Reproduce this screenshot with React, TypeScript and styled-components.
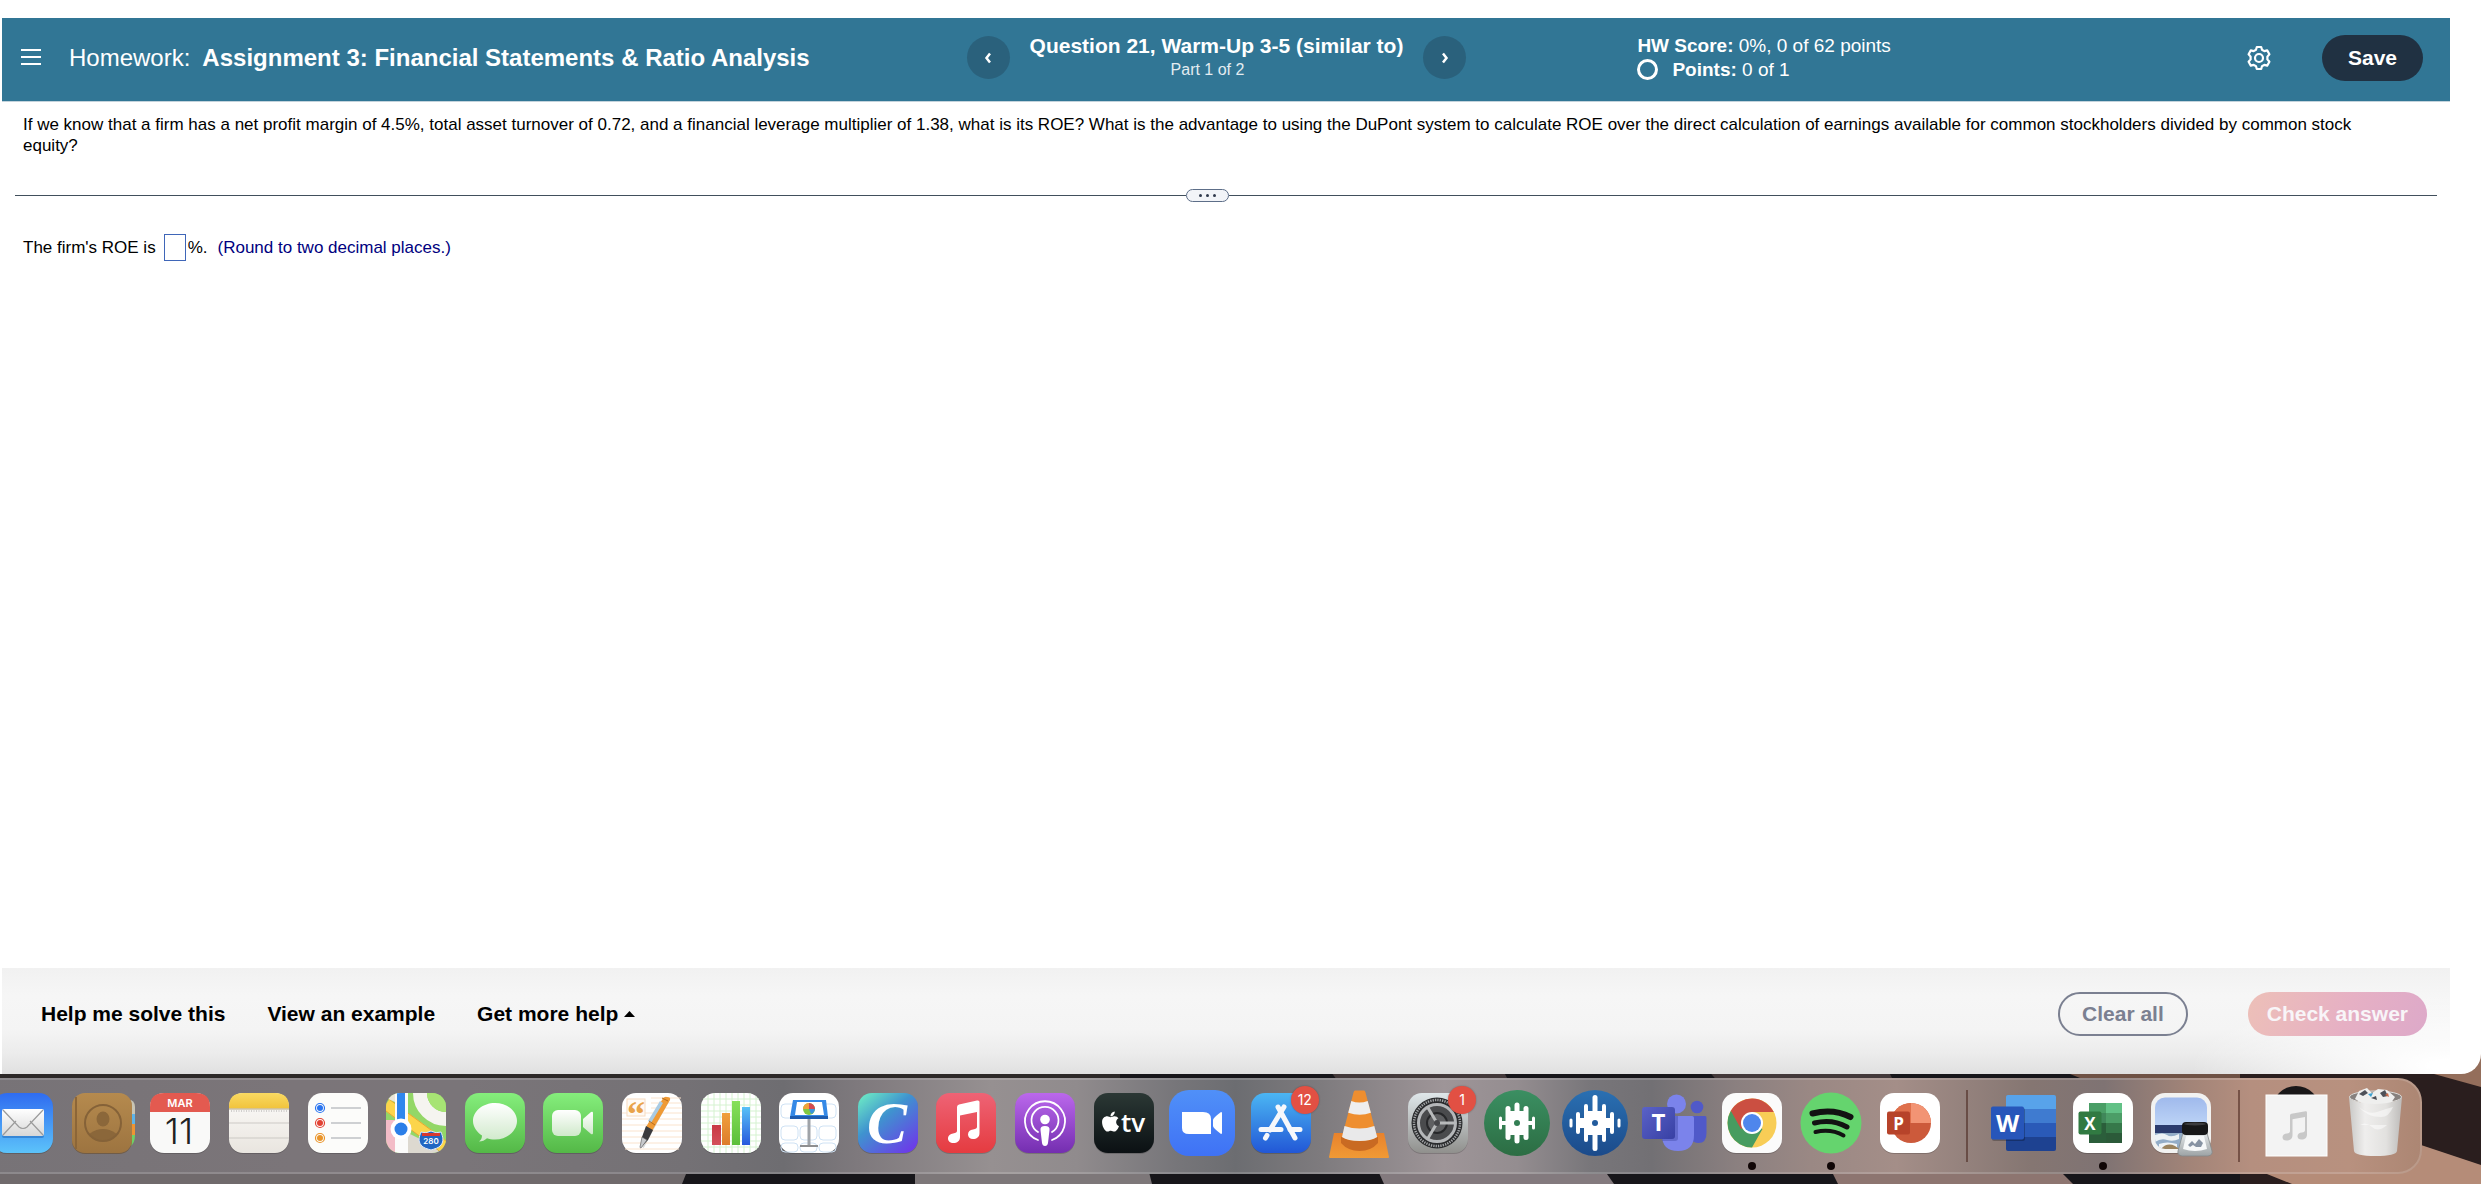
import React from 'react';
import styled, { createGlobalStyle } from 'styled-components';
import { FaApple } from 'react-icons/fa';

const sans = '"Liberation Sans", Arial, Helvetica, sans-serif';

const GlobalStyle = createGlobalStyle`
  *, *::before, *::after { box-sizing: border-box; }
  body { margin: 0; background: #1b1719; font-family: ${sans}; color: #000; }
  button, input { font-family: inherit; margin: 0; }
`;

/* ---------- page frame ---------- */

const Desktop = styled.div`
  position: relative;
  display: flex;
  flex-direction: column;
  min-height: 100vh;
  overflow: hidden;
`;

const Wallpaper = styled.svg`
  position: absolute;
  left: 0;
  bottom: 0;
  width: 100%;
  height: 140px;
`;

const BrowserWindow = styled.div`
  position: relative;
  flex: 1;
  display: flex;
  flex-direction: column;
  padding: 18px 31px 0 2px;
  background: #fff;
  border-bottom-right-radius: 20px;
`;

/* ---------- header ---------- */

const Header = styled.header`
  display: grid;
  grid-template-columns: 1fr auto 1fr;
  align-items: center;
  height: 84px;
  padding: 0 27px 4px 8px;
  background: #317695;
  border-bottom: 1px solid #c3d3dc;
  color: #fff;
`;

const HeaderStart = styled.div`
  display: flex;
  align-items: center;
  gap: 28px;
  padding-left: 11px;
`;

const IconButton = styled.button`
  display: flex;
  padding: 0;
  border: 0;
  background: none;
  color: inherit;
`;

const AssignmentTitle = styled.h1`
  margin: 0;
  font-size: 24px;
  line-height: 30px;
  font-weight: 400;
  white-space: nowrap;
`;

const AssignmentName = styled.strong`
  margin-left: 12px;
`;

const QuestionNav = styled.nav`
  display: flex;
  align-items: center;
  gap: 20px;
`;

const RoundButton = styled.button`
  display: flex;
  align-items: center;
  justify-content: center;
  width: 43px;
  height: 43px;
  padding: 0;
  border: 0;
  border-radius: 50%;
  background: #2a617c;
  color: #fff;
`;

const QuestionLabel = styled.div`
  text-align: center;
  line-height: 24px;
  white-space: nowrap;
`;

const QuestionTitle = styled.h2`
  margin: 0;
  font-size: 21px;
  line-height: 24px;
`;

const QuestionPart = styled.div`
  padding-right: 18px;
  font-size: 16px;
  color: #e3ecf1;
`;

const HeaderEnd = styled.div`
  display: flex;
  align-items: center;
  padding-left: 171px;
`;

const Score = styled.div`
  font-size: 19px;
  line-height: 24px;
  white-space: nowrap;
`;

const PointsRow = styled.div`
  display: flex;
  align-items: center;
  gap: 14px;
`;

const StatusRing = styled.span`
  width: 21px;
  height: 21px;
  border: 3px solid #fff;
  border-radius: 50%;
`;

const HeaderActions = styled.div`
  display: flex;
  align-items: center;
  gap: 50px;
  margin-left: auto;
`;

const SaveButton = styled.button`
  height: 46px;
  padding: 0 26px;
  border: 0;
  border-radius: 23px;
  background: #203142;
  color: #fff;
  font-size: 21px;
  font-weight: 700;
`;

/* ---------- question ---------- */

const Main = styled.main`
  flex: 1;
  padding: 12px 13px 0;
  font-size: 17px;
  line-height: 21px;
`;

const Question = styled.p`
  margin: 0;
  padding: 0 32px 0 8px;
`;

const Divider = styled.div`
  display: flex;
  align-items: center;
  margin: 33px 0 32px;

  &::before, &::after {
    content: '';
    flex: 1 1 0px;
    height: 1px;
    background: #414f5c;
  }

  &::after {
    flex-basis: 37px;
  }
`;

const DividerHandle = styled.button`
  display: flex;
  align-items: center;
  justify-content: center;
  gap: 4px;
  width: 43px;
  height: 13px;
  padding: 0;
  border: 1px solid #5d6e88;
  border-radius: 7px;
  background: #f2f4f8;
`;

const HandleDot = styled.span`
  width: 3px;
  height: 3px;
  border-radius: 50%;
  background: #303a4c;
`;

const AnswerRow = styled.div`
  display: flex;
  align-items: center;
  padding-left: 8px;
`;

const AnswerInput = styled.input`
  width: 22px;
  height: 27px;
  margin: 0 2px 0 8px;
  padding: 0 2px;
  border: 1px solid #3f66b8;
  border-radius: 0;
  background: #fff;
  font-size: 17px;
`;

const Hint = styled.span`
  margin-left: 10px;
  color: #000080;
`;

/* ---------- footer ---------- */

const Footer = styled.footer`
  display: flex;
  align-items: center;
  justify-content: space-between;
  padding: 24px 23px 38px 39px;
  background:
    radial-gradient(ellipse 260px 72px at 100% 92%, #fff 8%, rgba(255, 255, 255, 0) 100%),
    linear-gradient(#f1f1f1, #f6f6f6 26%, #f4f4f4 58%, #ececec 80%, #e0e0e0);
`;

const HelpLinks = styled.div`
  display: flex;
  gap: 42px;
`;

const HelpButton = styled.button`
  display: flex;
  align-items: center;
  gap: 6px;
  padding: 0;
  border: 0;
  background: none;
  color: #000;
  font-size: 21px;
  line-height: 24px;
  font-weight: 700;
`;

const FooterActions = styled.div`
  display: flex;
  gap: 60px;
`;

const PillButton = styled.button<{ $primary?: boolean }>`
  height: 44px;
  padding: 0 ${p => (p.$primary ? 19 : 22)}px;
  border: ${p => (p.$primary ? '0' : '2px solid #7b8091')};
  border-radius: 22px;
  background: ${p => (p.$primary ? 'linear-gradient(110deg, #edc0b8, #e6b0c4 55%, #dda9c9)' : 'transparent')};
  color: ${p => (p.$primary ? '#f8f5f8' : '#7b8091')};
  font-size: 21px;
  font-weight: 700;
`;

/* ---------- dock ---------- */

const Dock = styled.div`
  position: relative;
  display: flex;
  margin: 4px 59px 10px -24px;
  padding: 0 6px;
  border: 2px solid rgba(255, 255, 255, 0.16);
  border-radius: 24px;
  background: linear-gradient(90deg, #777377, #7b7579 13%, #7a7579 20%, #747175 29%, #6e6d71 33%,
    #7e797d 36%, #969091 41.5%, #908b8d 45%, #77767a 49%, #6c6d71 51.5%, #7e7b7e 55%, #9e9598 60%,
    #948d90 63%, #78767a 66%, #727074 68.5%, #8b8080 72%, #9a8884 75%, #a48e88 78.5%, #857672 84%,
    #7f7373 87%, #a28478 90.5%, #b58f7f 93%, #b8917f 97%, #ac8673);
  background-origin: border-box;
`;

const Slot = styled.div`
  position: relative;
  flex: 1 1 0;
  min-width: 0;
  display: flex;
  justify-content: center;
`;

const Art = styled.svg`
  flex: none;
  display: block;
  width: 80px;
  height: 92px;
  overflow: visible;
`;

const Badge = styled.span`
  position: absolute;
  top: 6px;
  left: calc(50% + 10px);
  width: 28px;
  height: 28px;
  border-radius: 50%;
  background: #e25043;
  box-shadow: 0 0 2px rgba(0, 0, 0, 0.3);
  color: #fff;
  font-family: Inter, sans-serif;
  font-size: 14px;
  line-height: 28px;
  text-align: center;
`;

const RunningDot = styled.span`
  position: absolute;
  bottom: 2px;
  left: calc(50% - 4px);
  width: 8px;
  height: 8px;
  border-radius: 50%;
  background: #100606;
`;

const DockRule = styled.div`
  width: 2px;
  height: 72px;
  margin: 10px 17px;
  background: rgba(70, 35, 25, 0.55);
`;

type TileProps = { fill: string };
const Tile = ({ fill }: TileProps) => (
  <>
    <rect x="10" y="14" width="60" height="60" rx="14" fill="#000" opacity="0.18" />
    <rect x="10" y="13" width="60" height="60" rx="14" fill={fill} />
  </>
);

const grad = (id: string, from: string, to: string, diagonal = false) => (
  <linearGradient id={id} x1="0" y1="0" x2={diagonal ? 1 : 0} y2="1">
    <stop offset="0" stopColor={from} />
    <stop offset="1" stopColor={to} />
  </linearGradient>
);

const Mail = () => (
  <>
    <defs>{grad('mail', '#2f6cf0', '#5cc3fa')}{grad('env', '#ffffff', '#d7d7d7')}</defs>
    <Tile fill="url(#mail)" />
    <rect x="19" y="30" width="42" height="28" rx="2" fill="#1b62b5" opacity=".5" />
    <rect x="19" y="29" width="42" height="27" rx="2" fill="url(#env)" />
    <path d="M20 55 33 41M60 55 47 41M20 30l16 17q4 3 8 0L60 30" fill="none" stroke="#9b9b9b" strokeWidth="1.2" />
  </>
);

const Contacts = () => (
  <>
    <defs>{grad('ctc', '#b58a4e', '#9d7440')}</defs>
    <path d="M62 20h7q4 2 4 7v7H62z" fill="#c9c5b4" />
    <path d="M62 34h11v10H62z" fill="#5db4ea" />
    <path d="M62 44h11v11H62z" fill="#ee9433" />
    <path d="M62 55h11q0 9-5 11h-6z" fill="#6fd065" />
    <rect x="10" y="14" width="60" height="60" rx="13" fill="#6b4d28" opacity=".6" />
    <rect x="10" y="13" width="60" height="60" rx="13" fill="url(#ctc)" />
    <path d="M14 17v52" stroke="#8c6638" strokeWidth="2" />
    <clipPath id="ctcClip"><circle cx="41" cy="43" r="18" /></clipPath>
    <g clipPath="url(#ctcClip)" fill="#8b673a">
      <ellipse cx="41" cy="39" rx="6.5" ry="7.5" />
      <ellipse cx="41" cy="62" rx="17" ry="13" />
    </g>
    <circle cx="41" cy="43" r="18" fill="none" stroke="#856238" strokeWidth="2" />
  </>
);

const Calendar = () => (
  <>
    <Tile fill="#f9f9f8" />
    <path d="M10 32v-5q0-14 14-14h32q14 0 14 14v5z" fill="#e35a50" />
    <text x="40" y="27" textAnchor="middle" fontFamily="Inter, sans-serif" fontWeight="600" fontSize="11" fill="#fff">MAR</text>
    <text x="39" y="64" textAnchor="middle" fontFamily="Inter, sans-serif" fontWeight="300" fontSize="36" fill="#222">11</text>
  </>
);

const Notes = () => (
  <>
    <defs>{grad('nts', '#fdfcfa', '#e9e5df')}{grad('ntsTop', '#f9da62', '#f1c33c')}</defs>
    <Tile fill="url(#nts)" />
    <path d="M10 28.500v-1.500q0-14 14-14h32q14 0 14 14v1.500z" fill="url(#ntsTop)" />
    <path d="M10 29h60" stroke="#b7a98a" />
    <path d="M12 31h56" stroke="#aaa" strokeDasharray="1 1.500" />
    <path d="M10 43h60M10 58h60" stroke="#ccc9c5" />
  </>
);

const Reminders = () => (
  <>
    <Tile fill="#fcfcfa" />
    {[['#2a74f0', 28], ['#e24334', 43], ['#ea9429', 58]].map(([c, y]) => (
      <g key={y}>
        <circle cx="22" cy={y} r="4.500" fill="none" stroke={c as string} strokeWidth="1.200" />
        <circle cx="22" cy={y} r="3" fill={c as string} />
        <path d={`M33 ${y}h30`} stroke="#bfc2c5" strokeWidth="1.500" />
      </g>
    ))}
  </>
);

const Maps = () => (
  <>
    <clipPath id="mapClip"><rect x="10" y="13" width="60" height="60" rx="14" /></clipPath>
    <g clipPath="url(#mapClip)">
      <rect x="10" y="13" width="60" height="60" fill="#93d767" />
      <path d="M10 40h10v33H10z" fill="#f3bcc7" />
      <path d="M32 53 70 72v1H32z" fill="#ddd9d0" />
      <circle cx="70" cy="13" r="26" fill="none" stroke="#f5f4f0" strokeWidth="14" />
      <circle cx="70" cy="13" r="19" fill="#a7e474" />
      <path d="M10 24 70 68" stroke="#fcd54b" strokeWidth="12" />
      <path d="M10 17 70 61M10 31 66 73" stroke="#e2a934" fill="none" />
      <path d="M19 13h13v60H19z" fill="#fbfbfa" />
      <path d="M21 13h8v34h-8z" fill="#2f87ee" />
      <path d="M10 13h9v9l-9-4z" fill="#e9e5da" />
    </g>
    <circle cx="25" cy="49" r="10.500" fill="#fff" />
    <circle cx="25" cy="49" r="6.500" fill="#2b7fe8" />
    <path d="M45 52q5 2 10-1 5 3 10 1c2 5 3 9 0 13-2 3-7 4-10 5-3-1-8-2-10-5-3-4-2-8 0-13z" fill="#2166c2" stroke="#dbe8fb" />
    <path d="M46 53h18v3H46z" fill="#d8392e" />
    <text x="55" y="64" textAnchor="middle" fontFamily="Inter, sans-serif" fontWeight="600" fontSize="8" fill="#fff">280</text>
  </>
);

const Messages = () => (
  <>
    <defs>{grad('grn', '#85ee7c', '#54b847')}{grad('bub', '#ffffff', '#cfe9ca')}</defs>
    <Tile fill="url(#grn)" />
    <path d="M40 23c12 0 22 8 22 18S52 59.500 40 59.500c-3 0-6-.5-8-1.300-2 2-5 3.300-8 3.300 2-1.500 3-3.500 3-6-5-3.300-9-8.500-9-14.500 0-10 10-18 22-18z" fill="url(#bub)" />
  </>
);

const FaceTime = () => (
  <>
    <Tile fill="url(#grn)" />
    <rect x="19" y="30" width="29" height="26" rx="6" fill="url(#bub)" />
    <path d="M50 39 58 32q2-1 2 1v20q0 2-2 1l-8-7z" fill="url(#bub)" />
  </>
);

const Pages = () => (
  <>
    <Tile fill="#fff" />
    <path d="M39 18h30M39 23h30M39 28h31M10 33h60M10 39h60M10 45h60M10 51h60M10 57h60M11 63h58M13 69h54" stroke="#fae3cd" />
    <rect x="15" y="19" width="18" height="17" fill="#fffaf4" stroke="#f7dcc2" />
    <text x="24" y="46" textAnchor="middle" fontFamily='"Liberation Serif", serif' fontWeight="700" fontSize="36" fill="#e9a34a">“</text>
    <path d="M30 67 45 39 56 19" fill="none" stroke="#000" opacity=".15" strokeWidth="4" />
    <path d="m34 47 6 4 18-31q1-3-3-3-3-1-5 3z" fill="#ef9a35" />
    <path d="m36 41 12-20 3 2-12 20z" fill="#a9cbe4" />
    <path d="m34 46 7 4-5 10-5 5-1-8z" fill="#3a3a3d" />
    <path d="m30 57 5 3-6 8q-1 0-1-1z" fill="#c7c9cc" stroke="#555" strokeWidth=".6" />
    <path d="m50 18 6 3M37 41l6 4" stroke="#b56a1b" />
  </>
);

const Numbers = () => (
  <>
    <defs>
      {grad('nR', '#c93a45', '#d4505a')}{grad('nO', '#f0a03c', '#dd7c2b')}
      {grad('nG', '#86e05a', '#5bbf3b')}{grad('nB', '#57c1f7', '#2858dd')}
    </defs>
    <Tile fill="#fff" />
    <path d="M17 15v56M23 13v60M29 13v60M35 13v60M41 13v60M47 13v60M53 13v60M59 13v60M65 16v54M12 19h56M10 25h60M10 31h60M10 37h60M10 43h60M10 49h60M10 55h60M10 61h60M12 67h56" stroke="#d5f2d0" />
    <rect x="21" y="45" width="9" height="20" fill="url(#nR)" />
    <rect x="31" y="33" width="8" height="32" fill="url(#nO)" />
    <rect x="41" y="21" width="8" height="44" fill="url(#nG)" />
    <rect x="51" y="27" width="8" height="38" fill="url(#nB)" />
  </>
);

const Keynote = () => (
  <>
    <Tile fill="#fff" />
    <g fill="none" stroke="#cfe2f4">
      {[12, 31, 50].map(x => [24, 46, 63].map(y => <rect key={`${x}-${y}`} x={x} y={y} width="17" height={y === 63 ? 9 : 14} rx="4" />))}
    </g>
    <path d="M38.500 38h3v27h-3z" fill="#9fa3a8" />
    <path d="M31 65h18v2H31z" fill="#8f8f90" />
    <path d="M24 20h33l2 17H21z" fill="#3589e6" />
    <path d="M21 36h38v3H21z" fill="#1f5cae" />
    <path d="M28 22h25l2 13H26z" fill="#fff" />
    <circle cx="40" cy="29" r="6" fill="#80c843" />
    <path d="M40 29v-6a6 6 0 0 1 6 6z" fill="#d34a52" />
    <path d="M40 29h-6a6 6 0 0 1 6-6z" fill="#f0a13c" />
    <path d="M40 29h6a6 6 0 0 1-4 5z" fill="#3b94db" />
  </>
);

const Canva = () => (
  <>
    <defs>
      <linearGradient id="cnv" x1="0" y1="0" x2=".8" y2="1">
        <stop offset="0" stopColor="#70f2c4" /><stop offset=".45" stopColor="#3f93cf" /><stop offset="1" stopColor="#6b3de8" />
      </linearGradient>
    </defs>
    <Tile fill="url(#cnv)" />
    <text x="39" y="63" textAnchor="middle" fontFamily='"Liberation Serif", serif' fontStyle="italic" fontWeight="700" fontSize="60" fill="#fff">C</text>
  </>
);

const Music = () => (
  <>
    <defs>{grad('mus', '#ee6375', '#e53b40')}</defs>
    <Tile fill="url(#mus)" />
    <path d="M31 27q0-2 2-2.500l18-4q2.500-.5 2.500 1.500v31c0 4-3 6-6.500 6-3 0-5-2-5-4.500 0-3 2-4.500 5-5 3-.6 4-1 4-3V32l-17 3.600V57c0 4-3 6-6.500 6-3.500 0-5.500-2-5.500-4.500 0-3 2.500-4.500 5-5 3-.6 4-1 4-3z" fill="#fff" />
  </>
);

const Podcasts = () => (
  <>
    <defs>{grad('pod', '#bb68ec', '#742eb0')}</defs>
    <Tile fill="url(#pod)" />
    <g fill="none" stroke="#fff" strokeWidth="1.800" strokeLinecap="round">
      <path d="M33 60a20 20 0 1 1 14 0" />
      <path d="M33 52a13.500 13.500 0 1 1 14 0" />
    </g>
    <circle cx="40" cy="39.500" r="4.800" fill="#fff" />
    <path d="M40 46q5 0 4.500 4l-1.500 13q-.5 3-3 3t-3-3l-1.500-13q-.5-4 4.500-4z" fill="#fff" />
  </>
);

const AppleTv = () => (
  <>
    <defs>{grad('atv', '#2b3835', '#0b1013')}</defs>
    <Tile fill="url(#atv)" />
    <g transform="translate(15 30)"><FaApple size={23} color="#fff" /></g>
    <text x="37" y="52" fontFamily='"Open Sans", sans-serif' fontWeight="600" fontSize="26" fill="#fff">tv</text>
  </>
);

const Zoom = () => (
  <>
    <defs>{grad('zm', '#5090f8', '#3f72f5')}</defs>
    <rect x="7" y="10" width="66" height="66" rx="20" fill="url(#zm)" />
    <path d="M20 32h21q8 0 8 7v15H27q-7 0-7-6z" fill="#fff" />
    <path d="M51 40q0-2 8-8 1 0 1 1v20q0 1-1 1-8-6-8-8z" fill="#fff" />
  </>
);

const AppStore = () => (
  <>
    <defs>{grad('aps', '#4bb6f3', '#2257d6')}</defs>
    <Tile fill="url(#aps)" />
    <g stroke="#f6f8fb" strokeWidth="5" strokeLinecap="round" fill="none">
      <path d="M43 27 29 50M37 27 54 58" />
      <path d="M20 49.500h20M49 49.500h10" />
      <path d="M24.500 58 26 55.500" />
    </g>
  </>
);

const Vlc = () => (
  <>
    <defs>{grad('vlcB', '#e8822c', '#f09a35')}</defs>
    <path d="M15 53h50l5 24q0 1-1 1H11q-1 0-1-1z" fill="url(#vlcB)" />
    <path d="M22 57h37v6q-7 8-18.500 8T22 63z" fill="#c96a22" />
    <path d="M36 10.500h9q1 0 1.500 2L58 57q-6 4-17.500 4T23 57l11.500-44.500q.5-2 1.500-2z" fill="#ee8e2f" />
    <path d="M32.300 21q8 3 16.400 0l3.200 11.800q-11 4-22.700 0z" fill="#eeeeee" />
    <path d="M25.500 46q15 5 29.800 0l2.900 11q-6 4-17.700 4T23 57z" fill="#e9e9ea" />
  </>
);

const Settings = () => (
  <>
    <defs>{grad('set', '#dfe7ea', '#90908d')}</defs>
    <Tile fill="url(#set)" />
    <circle cx="39" cy="43" r="25.500" fill="#2b2c2e" />
    <circle cx="39" cy="43" r="23" fill="none" stroke="#a4a6a8" strokeWidth="2.500" strokeDasharray="1.300 1.100" />
    <circle cx="39" cy="43" r="18.500" fill="#4a4b4d" stroke="#b5b7b9" strokeWidth="3" />
    <circle cx="39" cy="43" r="10" fill="#5f6062" stroke="#27282a" strokeWidth="2" />
    <path d="M39 43h19M39 43 29.500 27M39 43l-9.500 16" stroke="#b8babb" strokeWidth="3" />
    <circle cx="39" cy="43" r="3" fill="#46474a" />
  </>
);

const bars = (spec: number[][]) =>
  spec.map(([dx, half, w]) => (
    <React.Fragment key={dx}>
      {(dx ? [-dx, dx] : [0]).map(d => (
        <rect key={d} x={40 + d - w / 2} y={43 - half} width={w} height={half * 2} rx={w / 2} fill="#fff" />
      ))}
    </React.Fragment>
  ));

const GreenWave = () => (
  <>
    <defs>{grad('gw', '#3b8f62', '#2c6d43')}</defs>
    <circle cx="40" cy="43" r="33" fill="url(#gw)" />
    {bars([[0, 20.5, 5], [9, 17, 5], [16.5, 6.5, 3]])}
    <rect x="29" y="31" width="22" height="24" rx="1" fill="#fff" />
    <rect x="22" y="41" width="36" height="4" fill="#fff" />
    <circle cx="40" cy="43" r="3" fill="#347f54" />
  </>
);

const BlueWave = () => (
  <>
    <defs>{grad('bw', '#2a70b2', '#1b4a8a')}</defs>
    <circle cx="40" cy="43" r="33" fill="url(#bw)" />
    {bars([[0, 28, 5], [9, 19, 4], [17, 11, 4], [24, 4.5, 3]])}
    <rect x="24" y="38" width="32" height="10" fill="#fff" />
    <rect x="31" y="31" width="18" height="24" fill="#fff" />
    <circle cx="40" cy="43" r="3" fill="#225b9d" />
  </>
);

const Teams = () => (
  <>
    <defs>{grad('tms', '#5a62c8', '#3840a4', true)}</defs>
    <circle cx="63" cy="27" r="6.300" fill="#5059c9" />
    <path d="M58 36h13q1.500 0 1.500 2v15q0 10-8 10-5 0-8-4z" fill="#5059c9" />
    <circle cx="42.500" cy="24" r="9.500" fill="#7b83eb" />
    <path d="M28 36h30q2 0 2 2v17q0 16-16 16T28 55z" fill="#7b83eb" />
    <path d="M30 36h14v22q0 3-3 3H28z" fill="#4a52b0" opacity=".5" />
    <rect x="8" y="27" width="33" height="32" rx="3" fill="url(#tms)" />
    <text x="24.500" y="51" textAnchor="middle" fontFamily='"Open Sans", sans-serif' fontWeight="700" fontSize="24" fill="#fff">T</text>
  </>
);

const Chrome = () => (
  <>
    <Tile fill="#fbfbfb" />
    <circle cx="40" cy="43" r="24.500" fill="#f8cd56" />
    <path d="M40 43 18.800 30.700A24.500 24.500 0 0 0 40 67.500L50.500 49z" fill="#479c60" />
    <path d="M40 43 29 49 18.800 30.700A24.500 24.500 0 0 1 61.800 32H40z" fill="#cb4f41" />
    <circle cx="40" cy="43" r="11" fill="#fff" />
    <circle cx="40" cy="43" r="9" fill="#4f86ec" />
  </>
);

const Spotify = () => (
  <>
    <circle cx="40" cy="43" r="30.500" fill="#65d46e" />
    <g fill="none" stroke="#121212" strokeLinecap="round">
      <path d="M21.500 33.500Q42 28 59.500 37" strokeWidth="6" />
      <path d="M23.500 43Q41 38.500 56 47" strokeWidth="5" />
      <path d="M24.500 52Q40 48.500 52.500 55.500" strokeWidth="4" />
    </g>
  </>
);

const PowerPoint = () => (
  <>
    <Tile fill="#fff" />
    <circle cx="41" cy="43" r="20" fill="#cc5a3b" />
    <path d="M41 43V23a20 20 0 0 0-20 20z" fill="#df704c" />
    <path d="M41 43V23a20 20 0 0 1 20 20z" fill="#f29474" />
    <rect x="17" y="31.500" width="23" height="23" rx="2" fill="#b7432a" />
    <text x="28.500" y="49.500" textAnchor="middle" fontFamily='"Open Sans", sans-serif' fontWeight="700" fontSize="17" fill="#fff">P</text>
  </>
);

const Word = () => (
  <>
    <clipPath id="wdClip"><rect x="22" y="15" width="50" height="56" rx="2" /></clipPath>
    <g clipPath="url(#wdClip)">
      <path d="M22 15h50v14H22z" fill="#58a3ea" />
      <path d="M22 29h50v14H22z" fill="#3f7bd0" />
      <path d="M22 43h50v14H22z" fill="#2a5ab8" />
      <path d="M22 57h50v14H22z" fill="#1e4291" />
    </g>
    <rect x="8" y="28" width="33" height="33" rx="2" fill="#000" opacity=".25" />
    <rect x="7" y="26.500" width="33" height="33" rx="2" fill="#2756ba" />
    <text x="23.500" y="52" textAnchor="middle" fontFamily='"Open Sans", sans-serif' fontWeight="700" fontSize="24" fill="#fff">W</text>
  </>
);

const Excel = () => (
  <>
    <Tile fill="#fff" />
    <path d="M26 23h17v10H26z" fill="#4a9e66" />
    <path d="M43 23h16v10H43z" fill="#62c186" />
    <path d="M26 33h17v10H26z" fill="#40875a" />
    <path d="M43 33h16v10H43z" fill="#4c9d67" />
    <path d="M26 43h17v20H26z" fill="#2b5e3b" />
    <path d="M43 43h16v10H43z" fill="#36784a" />
    <path d="M43 53h16v10H43z" fill="#2b5a39" />
    <rect x="15.500" y="31.500" width="23" height="23" rx="2" fill="#317a42" />
    <text x="27" y="49.500" textAnchor="middle" fontFamily='"Open Sans", sans-serif' fontWeight="700" fontSize="17" fill="#fff">X</text>
  </>
);

const Preview = () => (
  <>
    <defs>{grad('sky', '#9fb9ec', '#bcd3f6')}{grad('jar', '#e4e8ea', '#9da3a5')}</defs>
    <Tile fill="#f2f2f1" />
    <clipPath id="pvClip"><rect x="14" y="17.500" width="52" height="51.500" rx="10" /></clipPath>
    <g clipPath="url(#pvClip)">
      <rect x="14" y="17" width="52" height="28" fill="url(#sky)" />
      <rect x="14" y="45" width="52" height="10" fill="#2c3c6e" />
      <rect x="14" y="53" width="52" height="17" fill="#93adc8" />
      <path d="M14 55q8-3 12 0t12-1v5q-6 3-12 1t-12 2zM18 64q8-3 18 0v5H18z" fill="#eef3f6" />
      <path d="M20 69q6-7 14-3l6 4z" fill="#9b8460" />
    </g>
    <path d="M42 53h24l5 18q1 4-4 5H41q-5-1-4-5z" fill="url(#jar)" stroke="#83898a" strokeWidth=".8" />
    <path d="M45 56h18l3 13q-12 4-24 0z" fill="#f6f8f9" />
    <path d="m47 65 4-4 3 3 4-5 4 4-2 4h-5l-3-2-3 2z" fill="#8793a3" />
    <rect x="41" y="42" width="26" height="13" rx="4" fill="#171718" />
    <ellipse cx="54" cy="44" rx="11" ry="1.500" fill="#3c3c3e" />
  </>
);

const AudioFile = () => (
  <>
    <circle cx="40" cy="30" r="24" fill="#191718" />
    <rect x="10" y="15" width="61" height="61" fill="#f3f3f3" stroke="#fff" />
    <path d="M34 35.500q0-1.500 1.500-1.800l14-2.500q1.500-.2 1.500 1.300v22c0 3-2 5-5.500 5-2.500 0-4-1.300-4-3.300 0-2.400 2-3.500 4.500-3.700 2-.2 3-.8 3-2.500V37l-12.500 2.300V55c0 4-2.500 5.500-6 5.500-2.600 0-4-1.300-4-3.300 0-2.300 2-3.500 4.500-3.700 2-.2 3-.8 3-2.500z" fill="#c8c8c8" />
  </>
);

const Trash = () => (
  <>
    <defs>
      <linearGradient id="tr" x1="0" x2="1" y1="0" y2="0">
        <stop offset="0" stopColor="#c9c8c6" /><stop offset=".3" stopColor="#efeeed" />
        <stop offset=".7" stopColor="#e2e1df" /><stop offset="1" stopColor="#bdbbb9" />
      </linearGradient>
    </defs>
    <ellipse cx="40.500" cy="17" rx="26" ry="6" fill="#87817e" stroke="#dcdbd9" />
    <path d="m20 19 4-8 8-3 5 5 6-4 9 1 8 7-4 6-14 3-14-2z" fill="#efefee" />
    <path d="m24 14 6-4 3 3-5 3zM45 13l5-3 3 6-5 1zM36 18l5-2 1 4z" fill="#4d5058" />
    <path d="m33 14 5-1-2 4z" fill="#3aa0d0" />
    <path d="m50 15 3-2 1 4z" fill="#c7694a" />
    <path d="M14 17q4 6 26 7 23-1 27-7l-5 54q-1 5-21.500 5T19 71z" fill="url(#tr)" />
    <path d="M24 27q10 8 18 5t16-5q-4 10-12 10-14 0-22-10zM25 45q6-4 12 2t15-2" fill="#fff" opacity=".5" />
  </>
);

type App = { name: string; art: React.FC; badge?: string; running?: boolean };

const apps: App[] = [
  { name: 'Mail', art: Mail },
  { name: 'Contacts', art: Contacts },
  { name: 'Calendar', art: Calendar },
  { name: 'Notes', art: Notes },
  { name: 'Reminders', art: Reminders },
  { name: 'Maps', art: Maps },
  { name: 'Messages', art: Messages },
  { name: 'FaceTime', art: FaceTime },
  { name: 'Pages', art: Pages },
  { name: 'Numbers', art: Numbers },
  { name: 'Keynote', art: Keynote },
  { name: 'Canva', art: Canva },
  { name: 'Music', art: Music },
  { name: 'Podcasts', art: Podcasts },
  { name: 'TV', art: AppleTv },
  { name: 'Zoom', art: Zoom },
  { name: 'App Store', art: AppStore, badge: '12' },
  { name: 'VLC', art: Vlc },
  { name: 'System Preferences', art: Settings, badge: '1' },
  { name: 'Audio Recorder', art: GreenWave },
  { name: 'Audio Editor', art: BlueWave },
  { name: 'Teams', art: Teams },
  { name: 'Chrome', art: Chrome, running: true },
  { name: 'Spotify', art: Spotify, running: true },
  { name: 'PowerPoint', art: PowerPoint },
];

const recentApps: App[] = [
  { name: 'Word', art: Word },
  { name: 'Excel', art: Excel, running: true },
  { name: 'Preview', art: Preview },
];

const files: App[] = [
  { name: 'Audio file', art: AudioFile },
  { name: 'Trash', art: Trash },
];

const DockItems = ({ items }: { items: App[] }) => (
  <>
    {items.map(({ name, art: Picture, badge, running }) => (
      <Slot key={name}>
        <Art viewBox="0 0 80 92" role="img" aria-label={name}><Picture /></Art>
        {badge && <Badge>{badge}</Badge>}
        {running && <RunningDot />}
      </Slot>
    ))}
  </>
);

export default function App() {
  return (
    <>
      <GlobalStyle />
      <Desktop>
        <Wallpaper viewBox="0 0 2481 140" preserveAspectRatio="none" aria-hidden="true">
          <rect width="2481" height="140" fill="#17161a" />
          <path d="M0 0h1120v40H0z" fill="#2d2928" />
          <path d="M1310 0h180l20 40h-170zM1685 0h190l20 40h-175z" fill="#43393a" />
          <path d="M0 120h690l-8 20H0z" fill="#706a6c" />
          <path d="M915 120h232l5 20H915z" fill="#7d7779" />
          <path d="M1375 120h225l14 20h-230z" fill="#837a7e" />
          <path d="M1828 120h225l20 20h-235z" fill="#8d7570" />
          <path d="M2060 26h180l60 16h-200z" fill="#6f5245" />
          <path d="M2240 26h241v114h-241z" fill="#2a1e1e" />
          <path d="M2434 30 2481 43V10h-51z" fill="#946e5b" />
          <path d="M2262 128 2292 140h189v-19l-60-20-100 20z" fill="#b58c78" />
        </Wallpaper>

        <BrowserWindow>
          <Header>
            <HeaderStart>
              <IconButton aria-label="Menu">
                <svg width="20" height="20" viewBox="0 0 20 20" stroke="#fff" strokeWidth="2">
                  <path d="M0 2h20M0 9h20M0 16h20" />
                </svg>
              </IconButton>
              <AssignmentTitle>
                Homework:<AssignmentName>Assignment 3: Financial Statements &amp; Ratio Analysis</AssignmentName>
              </AssignmentTitle>
            </HeaderStart>

            <QuestionNav aria-label="Questions">
              <RoundButton aria-label="Previous question">
                <svg width="10" height="12" viewBox="0 0 10 12" fill="none" stroke="currentColor" strokeWidth="2.500">
                  <path d="M7 1.500 3.500 6 7 10.500" />
                </svg>
              </RoundButton>
              <QuestionLabel>
                <QuestionTitle>Question 21, Warm-Up 3-5 (similar to)</QuestionTitle>
                <QuestionPart>Part 1 of 2</QuestionPart>
              </QuestionLabel>
              <RoundButton aria-label="Next question">
                <svg width="10" height="12" viewBox="0 0 10 12" fill="none" stroke="currentColor" strokeWidth="2.500">
                  <path d="M3 1.500 6.500 6 3 10.500" />
                </svg>
              </RoundButton>
            </QuestionNav>

            <HeaderEnd>
              <Score>
                <div><strong>HW Score:</strong> 0%, 0 of 62 points</div>
                <PointsRow>
                  <StatusRing />
                  <span><strong>Points:</strong> 0 of 1</span>
                </PointsRow>
              </Score>
              <HeaderActions>
                <IconButton aria-label="Settings">
                  <svg width="26" height="26" viewBox="0 0 26 26" fill="none" stroke="#fff" strokeWidth="2.200" strokeLinejoin="round">
                    <path d="M10.800 2h4.400l.8 2.800 2.300 1.300 2.900-.7 2.200 3.800-2 2.400v2.800l2 2.400-2.200 3.800-2.900-.7-2.300 1.300-.8 2.800h-4.400l-.8-2.800-2.300-1.300-2.900.7-2.200-3.800 2-2.400v-2.800l-2-2.400 2.200-3.800 2.900.7L10 4.800z" />
                    <circle cx="13" cy="13" r="4" />
                  </svg>
                </IconButton>
                <SaveButton>Save</SaveButton>
              </HeaderActions>
            </HeaderEnd>
          </Header>

          <Main>
            <Question>
              If we know that a firm has a net profit margin of 4.5%, total asset turnover of 0.72, and a financial
              leverage multiplier of 1.38, what is its ROE? What is the advantage to using the DuPont system to
              calculate ROE over the direct calculation of earnings available for common stockholders divided by
              common stock equity?
            </Question>
            <Divider>
              <DividerHandle aria-label="Resize panels">
                <HandleDot /><HandleDot /><HandleDot />
              </DividerHandle>
            </Divider>
            <AnswerRow>
              <label htmlFor="roe">The firm's ROE is</label>
              <AnswerInput id="roe" type="text" />
              <span>%.</span>
              <Hint>(Round to two decimal places.)</Hint>
            </AnswerRow>
          </Main>

          <Footer>
            <HelpLinks>
              <HelpButton>Help me solve this</HelpButton>
              <HelpButton>View an example</HelpButton>
              <HelpButton>
                Get more help
                <svg width="11" height="6" viewBox="0 0 11 6"><path d="M0 6 5.500 0 11 6z" /></svg>
              </HelpButton>
            </HelpLinks>
            <FooterActions>
              <PillButton>Clear all</PillButton>
              <PillButton $primary>Check answer</PillButton>
            </FooterActions>
          </Footer>
        </BrowserWindow>

        <Dock>
          <DockItems items={apps} />
          <DockRule />
          <DockItems items={recentApps} />
          <DockRule />
          <DockItems items={files} />
        </Dock>
      </Desktop>
    </>
  );
}
